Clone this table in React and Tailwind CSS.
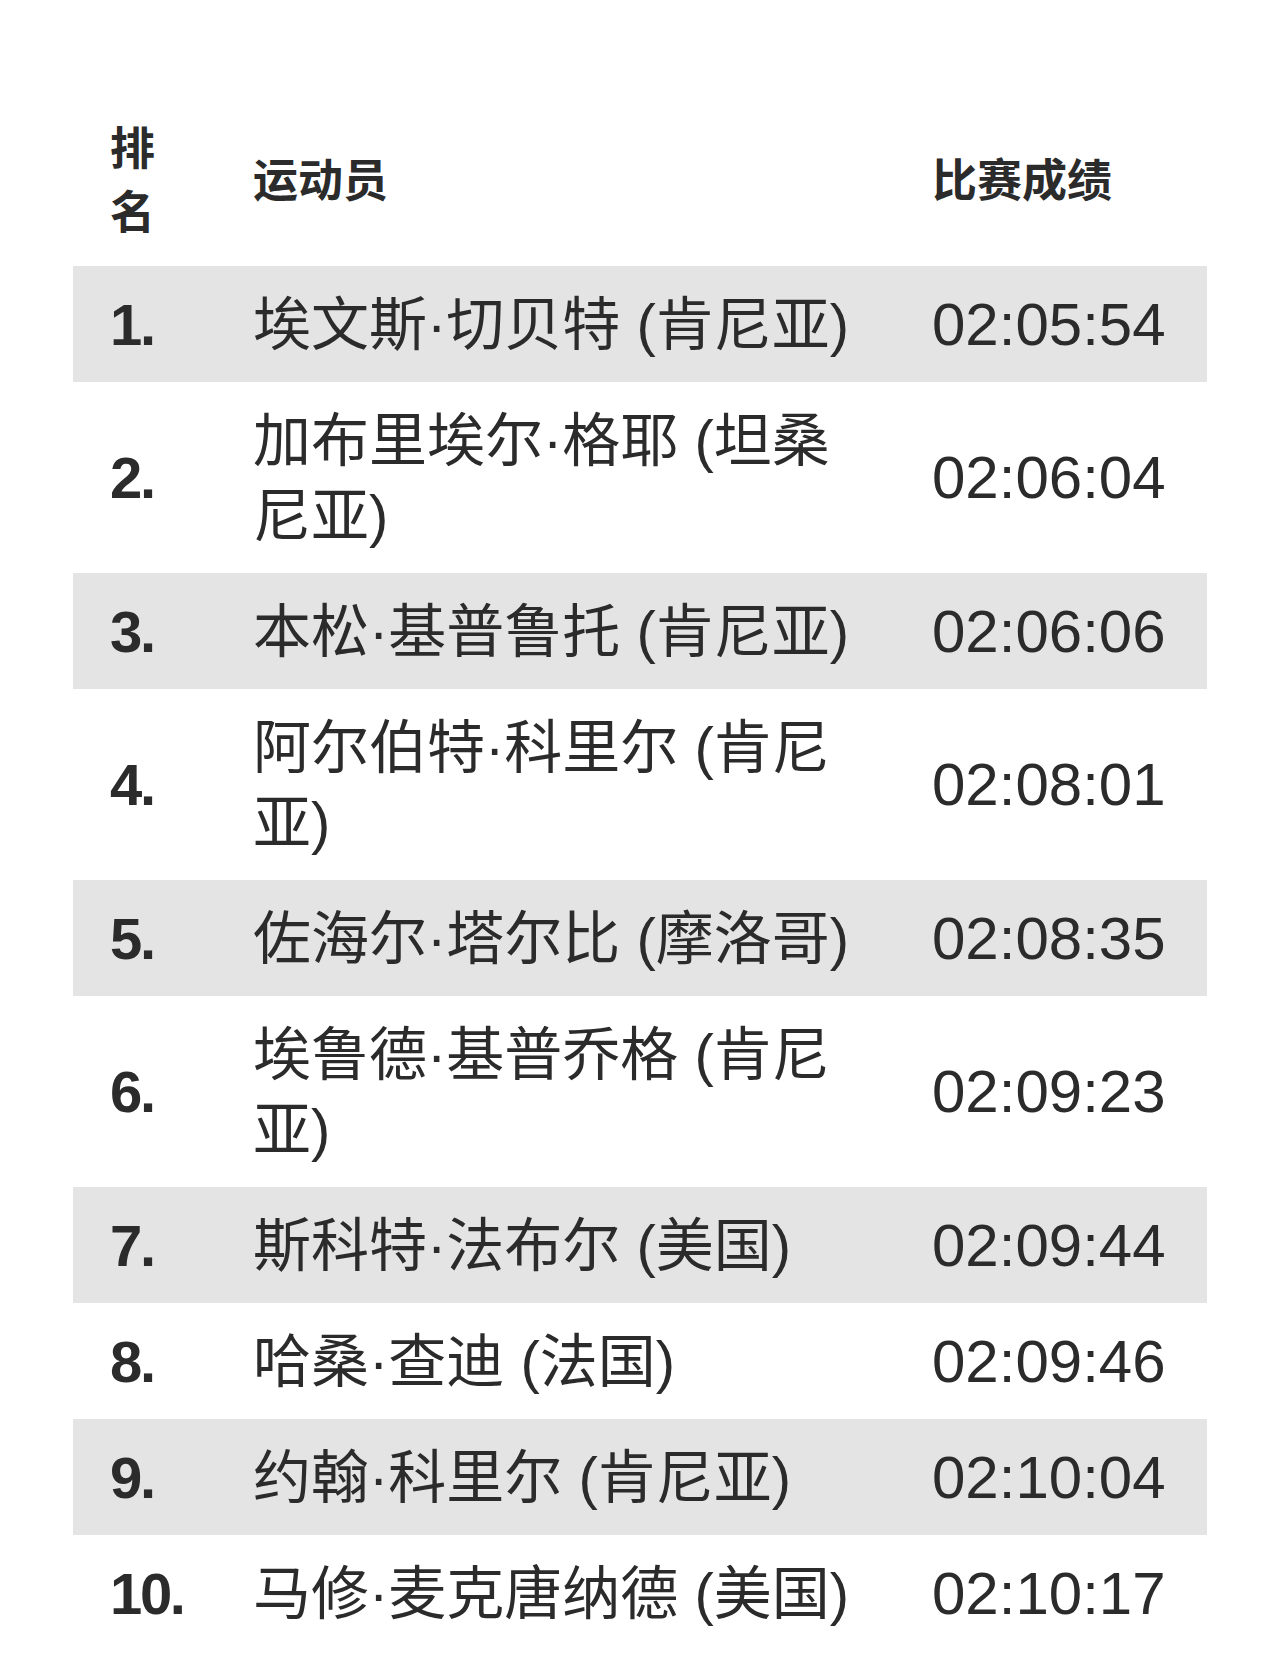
import React from 'react'

const rows = [
  { rank: '1.', name: '埃文斯·切贝特 (肯尼亚)', time: '02:05:54' },
  { rank: '2.', name: '加布里埃尔·格耶 (坦桑尼亚)', time: '02:06:04' },
  { rank: '3.', name: '本松·基普鲁托 (肯尼亚)', time: '02:06:06' },
  { rank: '4.', name: '阿尔伯特·科里尔 (肯尼亚)', time: '02:08:01' },
  { rank: '5.', name: '佐海尔·塔尔比 (摩洛哥)', time: '02:08:35' },
  { rank: '6.', name: '埃鲁德·基普乔格 (肯尼亚)', time: '02:09:23' },
  { rank: '7.', name: '斯科特·法布尔 (美国)', time: '02:09:44' },
  { rank: '8.', name: '哈桑·查迪 (法国)', time: '02:09:46' },
  { rank: '9.', name: '约翰·科里尔 (肯尼亚)', time: '02:10:04' },
  { rank: '10.', name: '马修·麦克唐纳德 (美国)', time: '02:10:17' }
]

const font = { fontFamily: '"Liberation Sans", "Noto Sans CJK SC", sans-serif' }

export default function App() {
  return (
    <div className="w-[1280px] h-[1676px] bg-white text-[#2b2b2b] pt-[118px] pl-[73px]" style={font}>
      <div className="w-[1134px]">
        {/* Header */}
        <div className="grid grid-cols-[180px_679px_1fr] items-center pb-[20px] font-bold text-[45px] leading-[64px]">
          <div className="pl-[37px] pr-[100px]">排名</div>
          <div>运动员</div>
          <div>比赛成绩</div>
        </div>

        {/* Rows */}
        {rows.map((r, i) => (
          <div
            key={r.rank}
            className={`grid grid-cols-[180px_679px_1fr] items-center py-[20.5px] leading-[75px] ${i % 2 === 0 ? 'bg-[#e4e4e4]' : 'bg-white'}`}
          >
            <div className="pl-[37px] font-bold text-[58px] tracking-[-0.04em]">{r.rank}</div>
            <div className="pr-[67px] text-[58px]">{r.name}</div>
            <div className="text-[60px]">{r.time}</div>
          </div>
        ))}
      </div>
    </div>
  )
}
